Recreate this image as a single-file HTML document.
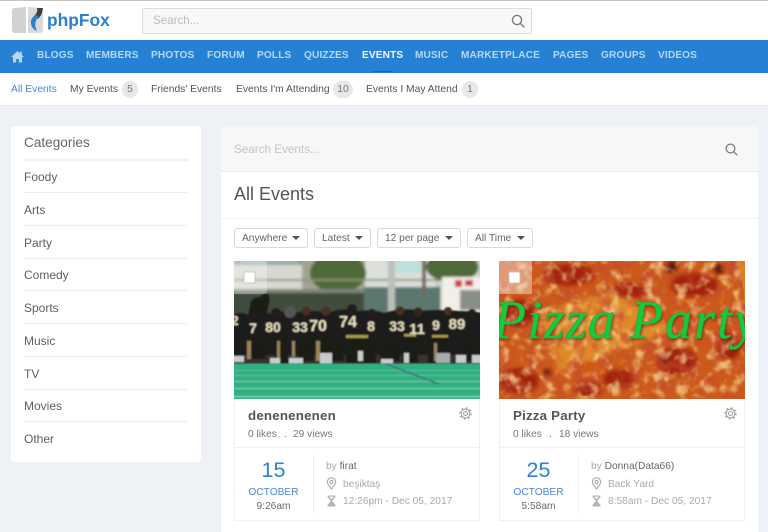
<!DOCTYPE html>
<html><head><meta charset="utf-8">
<style>
html,body{margin:0;padding:0}
body{width:768px;height:532px;overflow:hidden;background:#eef1f5;position:relative;font-family:"Liberation Sans",sans-serif;color:#555}
div,span,svg{position:absolute;box-sizing:border-box;white-space:nowrap}
#w{left:0;top:0;width:768px;height:532px;filter:blur(.3px)}
.nav span{top:49px;font-size:10.1px;font-weight:bold;line-height:14px;color:#b4d7f5;letter-spacing:.15px}
.sub{top:83px;font-size:10.3px;line-height:14px;color:#555}
.bdg{top:81px;height:17px;border-radius:9px;background:#e8e8e8;color:#777;font-size:10.3px;line-height:17px;text-align:center}
.cat{left:24px;width:164px;height:33px;border-bottom:1px solid #eceef0;font-size:12px;line-height:14px;color:#5f5f5f;padding-top:10px}
.flt{top:228px;height:20px;background:#fff;border:1px solid #d9d9d9;border-radius:3px;font-size:10.2px;line-height:20px;color:#666;padding-left:7px}
.flt i{position:absolute;right:7px;top:7px;width:0;height:0;border:4px solid transparent;border-top:4px solid #555;border-bottom:0}
.card{top:261px;width:246px;height:260px;background:#fff;border:1px solid #eef0f2;border-top:0}
.abs{position:absolute;white-space:nowrap}
.s{font-size:10.2px;line-height:13px}
.s span{position:static}
</style></head><body><div id="w">
<div style="left:0;top:0;width:768px;height:40px;background:#fff;border-top:1px solid #c4c4c4"></div>
<svg style="left:11px;top:7px" width="34" height="27" viewBox="0 0 34 27"><path d="M1 3 Q1 1 4 1 L15 0 V26 L4 26 Q1 26 1 23Z" fill="#d2d2d2"/><path d="M17 0 L29 1 Q32 1 32 3 V23 Q32 26 29 26 L17 26Z" fill="#dadada"/><path d="M32 1 L26 1 Q27 5 24 8 Q21 11 20 15 Q22 11 26 12 Q29 11 31 6Z" fill="#3c4045"/><path d="M24 8 Q19 12 20 17 Q21 22 26 24 Q23 18 25 14 Q26 11 28 9Z" fill="#2f80c8"/></svg>
<div style="left:47px;top:9px;font-size:17.4px;line-height:22px;font-weight:bold;color:#2a80cf">phpFox</div>
<div style="left:142px;top:8px;width:390px;height:26px;background:#f8f8f8;border:1px solid #ddd;border-radius:2px"></div>
<div style="left:153px;top:14px;font-size:11.6px;line-height:14px;color:#bbb">Search...</div>
<svg style="left:510px;top:13px" width="16" height="16" viewBox="0 0 16 16" fill="none" stroke="#777" stroke-width="1.3"><circle cx="7" cy="7" r="4.6"/><path d="M10.4 10.4L14 14" stroke-linecap="round"/></svg>

<div style="left:0;top:40px;width:768px;height:33px;background:#2681d5"></div>
<svg style="left:11px;top:50px" width="13" height="13" viewBox="0 0 13 13"><path d="M6.5 1L0 7h2v5.5h3.2V9h2.6v3.5H11V7h2L10.8 5V1.8H9v1.6z" fill="#b4d7f5"/></svg>
<div class="nav">
<span style="left:37px">BLOGS</span><span style="left:86px">MEMBERS</span><span style="left:151px">PHOTOS</span><span style="left:207px">FORUM</span><span style="left:257px">POLLS</span><span style="left:304px">QUIZZES</span><span style="left:362px;color:#f2f8fe">EVENTS</span><span style="left:415px">MUSIC</span><span style="left:461px">MARKETPLACE</span><span style="left:553px">PAGES</span><span style="left:601px">GROUPS</span><span style="left:658px">VIDEOS</span>
</div>
<div style="left:373px;top:71px;width:19px;height:1px;background:#2b5f90"></div>

<div style="left:0;top:73px;width:768px;height:33px;background:#fff;border-bottom:1px solid #e4e6e9"></div>
<div class="sub" style="left:11px;color:#4a86d8">All Events</div>
<div class="sub" style="left:70px">My Events</div><div class="bdg" style="left:122px;width:16px">5</div>
<div class="sub" style="left:151px">Friends' Events</div>
<div class="sub" style="left:236px">Events I'm Attending</div><div class="bdg" style="left:333px;width:20px">10</div>
<div class="sub" style="left:366px">Events I May Attend</div><div class="bdg" style="left:462px;width:16px">1</div>

<div style="left:11px;top:126px;width:190px;height:336px;background:#fff;border-radius:4px"></div>
<div style="left:24px;top:135px;font-size:13.6px;line-height:16px;color:#666">Categories</div>
<div style="left:24px;top:159px;width:164px;height:2px;background:#f1f2f4"></div>
<div class="cat" style="top:160px">Foody</div>
<div class="cat" style="top:193px">Arts</div>
<div class="cat" style="top:226px">Party</div>
<div class="cat" style="top:258px">Comedy</div>
<div class="cat" style="top:291px">Sports</div>
<div class="cat" style="top:324px">Music</div>
<div class="cat" style="top:357px">TV</div>
<div class="cat" style="top:389px">Movies</div>
<div class="cat" style="top:422px;border:0">Other</div>

<div style="left:221px;top:126px;width:537px;height:406px;background:#fff;border-radius:4px 4px 0 0"></div>
<div style="left:221px;top:126px;width:537px;height:46px;background:#f7f7f7;border-bottom:1px solid #eaeaea;border-radius:4px 4px 0 0"></div>
<div style="left:234px;top:143px;font-size:11.7px;line-height:14px;color:#c4c4c4">Search Events...</div>
<svg style="left:724px;top:142px" width="15" height="15" viewBox="0 0 15 15" fill="none" stroke="#777" stroke-width="1.2"><circle cx="6.5" cy="6.5" r="4.4"/><path d="M9.8 9.8L13 13" stroke-linecap="round"/></svg>
<div style="left:234px;top:184px;font-size:18px;line-height:21px;color:#555">All Events</div>
<div style="left:221px;top:218px;width:537px;height:1px;background:#f0f0f0"></div>
<div class="flt" style="left:234px;width:74px">Anywhere<i></i></div>
<div class="flt" style="left:314px;width:57px">Latest<i></i></div>
<div class="flt" style="left:377px;width:84px">12 per page<i></i></div>
<div class="flt" style="left:467px;width:66px">All Time<i></i></div>

<!-- card 1 -->
<div class="card" style="left:234px"></div>
<svg style="left:234px;top:261px" width="246" height="138" viewBox="0 0 246 138">
<defs><filter id="b" x="-5%" y="-5%" width="110%" height="110%"><feGaussianBlur stdDeviation="1.3"/></filter><filter id="b2" x="-5%" y="-5%" width="110%" height="110%"><feGaussianBlur stdDeviation=".7"/></filter><clipPath id="c1"><rect width="246" height="138"/></clipPath></defs>
<g clip-path="url(#c1)">
<rect width="246" height="138" fill="#c9cdc6"/>
<g filter="url(#b)">
<rect x="-4" y="-4" width="72" height="34" fill="#d8d8d0"/>
<rect x="0" y="-4" width="70" height="8" fill="#8f9c9e"/><rect x="6" y="-2" width="58" height="5" fill="#9fb0b2"/>
<rect x="68" y="-4" width="64" height="34" fill="#a3a294"/>
<rect x="131" y="-4" width="70" height="34" fill="#dcdfda"/>
<rect x="160" y="-4" width="28" height="16" fill="#c0e0dc"/>
<ellipse cx="104" cy="12" rx="28" ry="20" fill="#4f6a38"/>
<ellipse cx="218" cy="6" rx="26" ry="15" fill="#4f6a38"/>
<rect x="0" y="18" width="205" height="2" fill="#8f9272"/>
<rect x="-4" y="28" width="140" height="30" fill="#3f4d3e"/>
<rect x="0" y="28" width="140" height="4" fill="#7d8578"/>
<rect x="130" y="26" width="76" height="30" fill="#5c776f"/>
<rect x="154" y="-4" width="7" height="56" fill="#bcc1ba"/><rect x="188" y="-4" width="4" height="40" fill="#75685a"/>
<rect x="208" y="16" width="42" height="38" fill="#f2eee8"/><rect x="226" y="29" width="24" height="20" fill="#8a8e88"/><rect x="221" y="19" width="7" height="7" fill="#c84040"/><rect x="231" y="19" width="8" height="6" fill="#c84040"/>
</g>
<g filter="url(#b2)">
<rect x="0" y="78" width="246" height="26" fill="#37332e"/>
<path d="M13 60L17 40Q20 36 26 36L31 32Q37 33 35 42L32 56Z" fill="#1b1a18"/>
<path d="M-2 54Q8 50 14 54Q25 48 38 53Q50 48 60 52Q75 48 95 52Q108 46 125 50Q140 48 150 52Q170 46 185 50Q205 48 225 50Q240 50 248 52V94H-2Z" fill="#1e1c1a"/>
<g fill="#241f1c"><circle cx="42" cy="52" r="5"/><circle cx="56" cy="51" r="6" fill="#555"/><circle cx="72" cy="50" r="4.5" fill="#4a2f22"/><circle cx="92" cy="50" r="4.5" fill="#4a2f22"/><circle cx="118" cy="48" r="5"/><circle cx="138" cy="52" r="4"/><circle cx="166" cy="50" r="4.5" fill="#4a2f22"/><circle cx="184" cy="51" r="4.5" fill="#33251e"/><circle cx="214" cy="50" r="4" fill="#4a2f22"/><circle cx="238" cy="52" r="4"/></g>
<g fill="#1c1a18"><rect x="16" y="76" width="16" height="22"/><rect x="40" y="76" width="14" height="26"/><rect x="64" y="76" width="16" height="24"/><rect x="86" y="76" width="24" height="24"/><rect x="112" y="76" width="30" height="26" /><rect x="146" y="76" width="20" height="24"/><rect x="168" y="76" width="16" height="26"/><rect x="194" y="76" width="20" height="26"/><rect x="226" y="76" width="18" height="24"/></g>
<g fill="#9a8258"><rect x="13" y="80" width="4" height="18"/><rect x="43" y="80" width="3" height="20"/><rect x="82" y="80" width="4" height="20"/><rect x="58" y="80" width="3" height="16"/><rect x="200" y="82" width="3" height="18"/></g>
<g fill="#c8cccc"><rect x="0" y="95" width="10" height="6"/><rect x="36" y="97" width="10" height="6"/><rect x="55" y="97" width="14" height="6"/><rect x="86" y="92" width="12" height="11"/><rect x="124" y="90" width="5" height="10"/><rect x="147" y="98" width="12" height="5"/><rect x="170" y="92" width="5" height="10"/><rect x="202" y="92" width="14" height="10" fill="#a8acac"/><rect x="222" y="94" width="10" height="8"/><rect x="238" y="94" width="8" height="8"/></g>
<g fill="#a89a4a"><rect x="112" y="74" width="22" height="3"/><rect x="198" y="74" width="16" height="2.5"/><rect x="170" y="73" width="12" height="2.5"/></g>
<g font-family="Liberation Sans,sans-serif" font-weight="bold" fill="#eae2c0" text-anchor="middle"><text x="1" y="64" font-size="13">2</text><text x="19" y="72" font-size="14">7</text><text x="39" y="71" font-size="14">80</text><text x="66" y="71" font-size="14">33</text><text x="84" y="70" font-size="16">70</text><text x="114" y="66" font-size="16">74</text><text x="137" y="70" font-size="14">8</text><text x="163" y="70" font-size="14">33</text><text x="183" y="73" font-size="15">11</text><text x="202" y="69" font-size="14">9</text><text x="223" y="68" font-size="15">89</text></g>
</g>
<g filter="url(#b2)">
<rect x="-4" y="102.5" width="254" height="40" fill="#2fb081"/>
<g fill="#a6e0cc"><rect x="-4" y="109" width="254" height=".8" opacity=".45"/><rect x="-4" y="114" width="254" height=".8" opacity=".5"/><rect x="-4" y="120" width="254" height="1" opacity=".6"/><rect x="-4" y="127" width="254" height="1" opacity=".7"/><rect x="-4" y="135" width="254" height="1.2" opacity=".8"/></g>
<path d="M152 103L205 123" stroke="#455e84" stroke-width="1.4"/>
</g>
</g>
<rect width="33" height="33" fill="#fff" opacity=".3"/>
<rect x="10" y="11" width="11" height="11" rx="1" fill="#fff" stroke="#c8c8c8"/>
</svg>
<div class="abs" style="left:248px;top:408px;font-size:13.3px;line-height:16px;font-weight:bold;color:#555;letter-spacing:.2px">denenenenen</div>
<div class="abs s" style="left:248px;top:428px;color:#777">0 likes</div><div class="abs s" style="left:284px;top:428px;color:#777">.</div><div class="abs s" style="left:293px;top:428px;color:#777">29 views</div>
<svg style="left:459px;top:407px" width="13" height="13" viewBox="0 0 13 13" fill="none" stroke="#a0a0a0" stroke-width="1.1"><circle cx="6.5" cy="6.5" r="2"/><circle cx="6.5" cy="6.5" r="4.4"/><circle cx="6.5" cy="6.5" r="5.4" stroke-dasharray="1.7 2.54" stroke-width="1.6"/></svg>
<div class="abs" style="left:234px;top:447px;width:246px;height:1px;background:#eef0f2"></div>
<div class="abs" style="left:313px;top:454px;width:1px;height:59px;background:#eef0f2"></div>
<div class="abs" style="left:234px;top:458px;width:79px;text-align:center;font-size:21.5px;line-height:24px;color:#2e80d6">15</div>
<div class="abs s" style="left:234px;top:486px;width:79px;text-align:center;color:#4a86d8">OCTOBER</div>
<div class="abs s" style="left:234px;top:500px;width:79px;text-align:center;color:#666">9:26am</div>
<div class="abs s" style="left:326px;top:460px;color:#aaa">by <span style="color:#666">firat</span></div>
<svg style="left:326px;top:477px" width="11" height="13" viewBox="0 0 11 13" fill="none" stroke="#aaa" stroke-width="1.1"><path d="M5.5 12C3 9 1.3 7 1.3 5a4.2 4.2 0 018.4 0c0 2-1.7 4-4.2 7z"/><circle cx="5.5" cy="5" r="1.5"/></svg>
<div class="abs s" style="left:343px;top:478px;color:#aaa">beşiktaş</div>
<svg style="left:327px;top:495px" width="9" height="12" viewBox="0 0 9 12"><path d="M.5.5h8v1.4L5.2 6l3.3 4.1v1.4h-8v-1.4L3.8 6 .5 1.9z" fill="#b4b4b4"/><path d="M2.4 1.6h4.2L4.5 4.4z" fill="#fff"/></svg>
<div class="abs s" style="left:343px;top:495px;color:#aaa">12:26pm - Dec 05, 2017</div>

<!-- card 2 -->
<div class="card" style="left:499px"></div>
<svg style="left:499px;top:261px" width="246" height="138" viewBox="0 0 246 138">
<defs>
<filter id="p" x="-5%" y="-5%" width="110%" height="110%"><feGaussianBlur stdDeviation="2.2"/></filter>
<filter id="tx" x="0" y="0" width="100%" height="100%"><feTurbulence type="fractalNoise" baseFrequency=".07" numOctaves="4" seed="7"/><feColorMatrix values="0 0 0 0 .55  0 0 0 0 .07  0 0 0 0 .03  3 0 0 0 -1.3"/><feGaussianBlur stdDeviation=".7"/></filter>
<filter id="tx2" x="0" y="0" width="100%" height="100%"><feTurbulence type="fractalNoise" baseFrequency=".09" numOctaves="4" seed="21"/><feColorMatrix values="0 0 0 0 .97  0 0 0 0 .76  0 0 0 0 .32  0 3.5 0 0 -1.75"/><feGaussianBlur stdDeviation=".7"/></filter>
<filter id="sh" x="-5%" y="-20%" width="110%" height="140%"><feDropShadow dx="1" dy="1.5" stdDeviation="1.2" flood-color="#3a1a08" flood-opacity=".6"/></filter>
<clipPath id="c2"><rect width="246" height="138"/></clipPath>
</defs>
<g clip-path="url(#c2)">
<rect width="246" height="138" fill="#cc5a1a"/>
<g filter="url(#p)">
<path d="M40 50L120 28 175 70 60 110Z" fill="#e08a2a"/>
<g fill="#a32010"><ellipse cx="70" cy="14" rx="26" ry="11"/><ellipse cx="130" cy="30" rx="18" ry="8"/><ellipse cx="195" cy="24" rx="24" ry="12"/><ellipse cx="20" cy="120" rx="20" ry="13"/><ellipse cx="178" cy="100" rx="20" ry="14"/><ellipse cx="120" cy="118" rx="16" ry="10"/><ellipse cx="230" cy="85" rx="12" ry="14"/><ellipse cx="90" cy="128" rx="14" ry="8"/><ellipse cx="20" cy="52" rx="16" ry="14"/></g>
<g fill="#5a120c"><circle cx="220" cy="8" r="5"/><circle cx="172" cy="6" r="6"/><circle cx="165" cy="98" r="4"/><circle cx="48" cy="112" r="4"/></g>
</g>
<rect width="246" height="138" filter="url(#tx)" opacity=".75"/>
<rect width="246" height="138" filter="url(#tx2)" opacity=".7"/>
<path d="M238 0Q248 30 246 70V0Z" fill="#e08024" opacity=".9"/>
<g font-family="Liberation Serif,serif" font-style="italic" font-size="54" fill="#17c93d" stroke="#12b834" stroke-width=".6" filter="url(#sh)">
<text x="-6" y="77" textLength="122" lengthAdjust="spacing">Pizza</text>
<text x="131" y="77" textLength="128" lengthAdjust="spacing">Party</text>
</g>
</g>
<rect width="33" height="33" fill="#fff" opacity=".4"/>
<rect x="10" y="11" width="11" height="11" rx="1" fill="#fff" stroke="#d0c0c0"/>
</svg>
<div class="abs" style="left:513px;top:408px;font-size:13.3px;line-height:16px;font-weight:bold;color:#555;letter-spacing:.2px">Pizza Party</div>
<div class="abs s" style="left:513px;top:428px;color:#777">0 likes</div><div class="abs s" style="left:549px;top:428px;color:#777">.</div><div class="abs s" style="left:559px;top:428px;color:#777">18 views</div>
<svg style="left:724px;top:407px" width="13" height="13" viewBox="0 0 13 13" fill="none" stroke="#a0a0a0" stroke-width="1.1"><circle cx="6.5" cy="6.5" r="2"/><circle cx="6.5" cy="6.5" r="4.4"/><circle cx="6.5" cy="6.5" r="5.4" stroke-dasharray="1.7 2.54" stroke-width="1.6"/></svg>
<div class="abs" style="left:499px;top:447px;width:246px;height:1px;background:#eef0f2"></div>
<div class="abs" style="left:578px;top:454px;width:1px;height:59px;background:#eef0f2"></div>
<div class="abs" style="left:499px;top:458px;width:79px;text-align:center;font-size:21.5px;line-height:24px;color:#2e80d6">25</div>
<div class="abs s" style="left:499px;top:486px;width:79px;text-align:center;color:#4a86d8">OCTOBER</div>
<div class="abs s" style="left:499px;top:500px;width:79px;text-align:center;color:#666">5:58am</div>
<div class="abs s" style="left:591px;top:460px;color:#aaa">by <span style="color:#666">Donna(Data66)</span></div>
<svg style="left:591px;top:477px" width="11" height="13" viewBox="0 0 11 13" fill="none" stroke="#aaa" stroke-width="1.1"><path d="M5.5 12C3 9 1.3 7 1.3 5a4.2 4.2 0 018.4 0c0 2-1.7 4-4.2 7z"/><circle cx="5.5" cy="5" r="1.5"/></svg>
<div class="abs s" style="left:608px;top:478px;color:#aaa">Back Yard</div>
<svg style="left:592px;top:495px" width="9" height="12" viewBox="0 0 9 12"><path d="M.5.5h8v1.4L5.2 6l3.3 4.1v1.4h-8v-1.4L3.8 6 .5 1.9z" fill="#b4b4b4"/><path d="M2.4 1.6h4.2L4.5 4.4z" fill="#fff"/></svg>
<div class="abs s" style="left:608px;top:495px;color:#aaa">8:58am - Dec 05, 2017</div>
</div></body></html>
